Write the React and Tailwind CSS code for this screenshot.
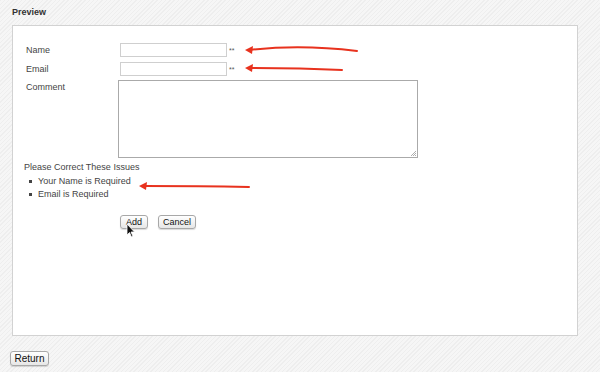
export default function App() {
  const font = { fontFamily: '"Liberation Sans", Arial, sans-serif' };
  const btn =
    "flex items-center justify-center h-[14px] px-[4px] rounded-[3px] border border-[#a8a8a8] bg-[linear-gradient(#ffffff,#e6e6e6)] text-[9px] leading-none text-[#111] shadow-[0_1px_1px_rgba(0,0,0,0.15)]";

  return (
    <div
      style={font}
      className="relative w-[600px] h-[372px] overflow-hidden bg-[repeating-linear-gradient(135deg,#eeeeee_0px,#eeeeee_1px,#f6f6f6_1px,#f6f6f6_3px)]"
    >
      <div className="pl-[12px] pt-[6px] h-[25px] text-[9px] font-bold text-[#333]">
        Preview
      </div>

      <div className="relative ml-[12px] w-[566px] h-[311px] bg-white border border-[#d2d2d2]">
        <div className="pl-[13px] pt-[17px] grid grid-cols-[94px_1fr] gap-y-[5px] text-[9px] text-[#444] items-start">
          <span className="leading-[14px]">Name</span>
          <div className="flex items-center gap-[2px]">
            <div className="w-[107px] h-[14px] border border-[#cfcfcf] bg-white" />
            <span className="text-[7px] text-[#555] leading-none">**</span>
          </div>
          <span className="leading-[14px]">Email</span>
          <div className="flex items-center gap-[2px]">
            <div className="w-[107px] h-[14px] border border-[#cfcfcf] bg-white" />
            <span className="text-[7px] text-[#555] leading-none">**</span>
          </div>
          <span className="leading-[14px] -mt-[1px]">Comment</span>
          <div className="-ml-[2px] -mt-[1px] relative w-[300px] h-[78px] border border-[#aaa] bg-white">
            <svg className="absolute right-[1px] bottom-[1px]" width="6" height="6" viewBox="0 0 6 6">
              <path d="M1 6 L6 1 M3 6 L6 3 M5 6 L6 5" stroke="#999" strokeWidth="0.8" />
            </svg>
          </div>
        </div>

        <div className="pl-[11px] pt-[3px] text-[9px] text-[#444]">
          <div className="leading-[13px]">Please Correct These Issues</div>
          <ul className="mt-[1px]">
            <li className="flex items-center leading-[13px]">
              <span className="ml-[5px] mr-[6px] w-[3px] h-[3px] bg-[#444]" />
              Your Name is Required
            </li>
            <li className="flex items-center leading-[13px]">
              <span className="ml-[5px] mr-[6px] w-[3px] h-[3px] bg-[#444]" />
              Email is Required
            </li>
          </ul>
        </div>

        <div className="flex gap-[10px] pl-[107px] pt-[14px]">
          <button className={btn + " w-[28px]"}>Add</button>
          <button className={btn + " w-[38px]"}>Cancel</button>
        </div>
      </div>

      <div className="flex pl-[10px] pt-[15px]">
        <button className={btn + " text-[10px] w-[39px] h-[15px]"}>Return</button>
      </div>

      <svg className="absolute left-0 top-0 pointer-events-none" width="600" height="372">
        <g fill="none" stroke="#e8321e" strokeWidth="2" strokeLinecap="round">
          <path d="M250 50 Q300 44 357 51" />
          <path d="M250 68 Q300 68 342 70" />
          <path d="M144 186 Q200 186 249 187" />
        </g>
        <g fill="#e8321e">
          <path d="M245 50 L253 46 L252 54 Z" />
          <path d="M245 68 L253 64 L252 72 Z" />
          <path d="M139 186 L147 182 L146 190 Z" />
        </g>
        <path
          d="M127 224 L127 235 L129.5 232.5 L131.5 237 L133 236.3 L131 232 L134.5 232 Z"
          fill="#111"
          stroke="#fff"
          strokeWidth="0.8"
        />
      </svg>
    </div>
  );
}
